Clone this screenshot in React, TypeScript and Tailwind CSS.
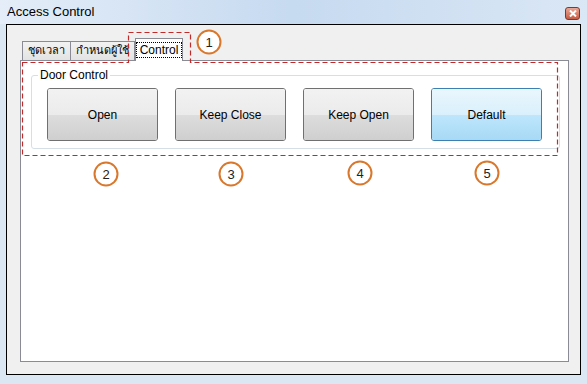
const buttons = [
  { label: "Open", active: false },
  { label: "Keep Close", active: false },
  { label: "Keep Open", active: false },
  { label: "Default", active: true },
];

const markers = [
  { n: 1, x: 209, y: 42 },
  { n: 2, x: 106, y: 174 },
  { n: 3, x: 231, y: 174 },
  { n: 4, x: 360, y: 173 },
  { n: 5, x: 487, y: 173 },
];

function DoorButton({ label, active }: { label: string; active: boolean }) {
  return (
    <button
      className={`relative w-[111px] h-[53px] rounded-[3px] border text-[12px] overflow-hidden ${
        active ? "border-[#3c7fb1]" : "border-[#707070]"
      }`}
    >
      <div className="absolute inset-0 flex flex-col">
        <div
          className={`h-1/2 bg-gradient-to-b ${
            active ? "from-[#eaf6fd] to-[#d9f0fc]" : "from-[#f2f2f2] to-[#ebebeb]"
          }`}
        />
        <div
          className={`h-1/2 bg-gradient-to-b ${
            active ? "from-[#bee6fd] to-[#a7d9f5]" : "from-[#dddddd] to-[#cfcfcf]"
          }`}
        />
      </div>
      <span className="relative">{label}</span>
    </button>
  );
}

export default function App() {
  return (
    <div className="relative w-[587px] h-[384px] bg-[#dce7f4] font-['Liberation_Sans',sans-serif] text-black overflow-hidden">
      {/* Title bar */}
      <div className="h-[24px] flex items-center justify-between pl-[7px] pr-[7px] bg-gradient-to-r from-[#e4edf8] via-[#c6daf0] to-[#dae7f5]">
        <span className="text-[13px]">Access Control</span>
        <div className="w-[15px] h-[13px] mt-[2px] rounded-[3px] border border-[#7d3a2c] bg-gradient-to-b from-[#e9a797] to-[#c55a42] flex items-center justify-center">
          <svg width="8" height="7" viewBox="0 0 8 7">
            <path d="M1 0.5 L7 6.5 M7 0.5 L1 6.5" stroke="#fff" strokeWidth="2" />
          </svg>
        </div>
      </div>

      {/* Client area */}
      <div className="mx-[6px] h-[351px] border border-black bg-[#f0f0f0] pl-[13px] pt-[13px] pr-[11px] pb-[12px] flex flex-col">
        {/* Tabs */}
        <div className="h-[22px] flex items-end pl-[2px] text-[12px]">
          <div className="h-[19px] w-[49px] border border-b-0 border-[#898c95] bg-gradient-to-b from-[#f2f2f2] to-[#e3e3e3] flex items-center justify-center pt-[1px] overflow-hidden whitespace-nowrap text-[11px] font-['DejaVu_Sans',sans-serif]">
            ชุดเวลา
          </div>
          <div className="h-[19px] w-[64px] border border-b-0 border-l-0 border-[#898c95] bg-gradient-to-b from-[#f2f2f2] to-[#e3e3e3] flex items-center justify-center pt-[1px] overflow-hidden whitespace-nowrap text-[11px] font-['DejaVu_Sans',sans-serif]">
            กำหนดผู้ใช้
          </div>
          <div className="relative z-10 h-[23px] -mb-px w-[48px] border border-b-0 border-[#898c95] bg-white flex items-center justify-center">
            <span className="border border-dotted border-black px-[3px] leading-[14px]">Control</span>
          </div>
        </div>

        {/* Tab page */}
        <div className="flex-1 border border-[#898c95] bg-white pl-[10px] pr-[8px] pt-[7px]">
          <fieldset className="rounded-[3px] border border-[#d5dfe5] pl-[15px] pt-[6px] pb-[7px]">
            <legend className="ml-[-9px] px-[2px] text-[12px] leading-[14px]">Door Control</legend>
            <div className="flex gap-[17px]">
              {buttons.map((b) => (
                <DoorButton key={b.label} label={b.label} active={b.active} />
              ))}
            </div>
          </fieldset>
        </div>
      </div>

      {/* Annotations */}
      <svg className="absolute inset-0 pointer-events-none" width="587" height="384">
        <path
          d="M22.5 62.5 H128.5 V32.5 H190.5 V62.5 H557.5 V155.5 H22.5 Z"
          fill="none"
          stroke="#c02a2a"
          strokeWidth="1.2"
          strokeDasharray="5 3"
        />
        {markers.map((m) => (
          <g key={m.n}>
            <circle cx={m.x} cy={m.y} r="11.5" fill="#fff" stroke="#d9782c" strokeWidth="2" />
            <text
              x={m.x}
              y={m.y + 5}
              textAnchor="middle"
              fontSize="13"
              fontFamily="Liberation Sans, sans-serif"
              fill="#222"
            >
              {m.n}
            </text>
          </g>
        ))}
      </svg>
    </div>
  );
}
